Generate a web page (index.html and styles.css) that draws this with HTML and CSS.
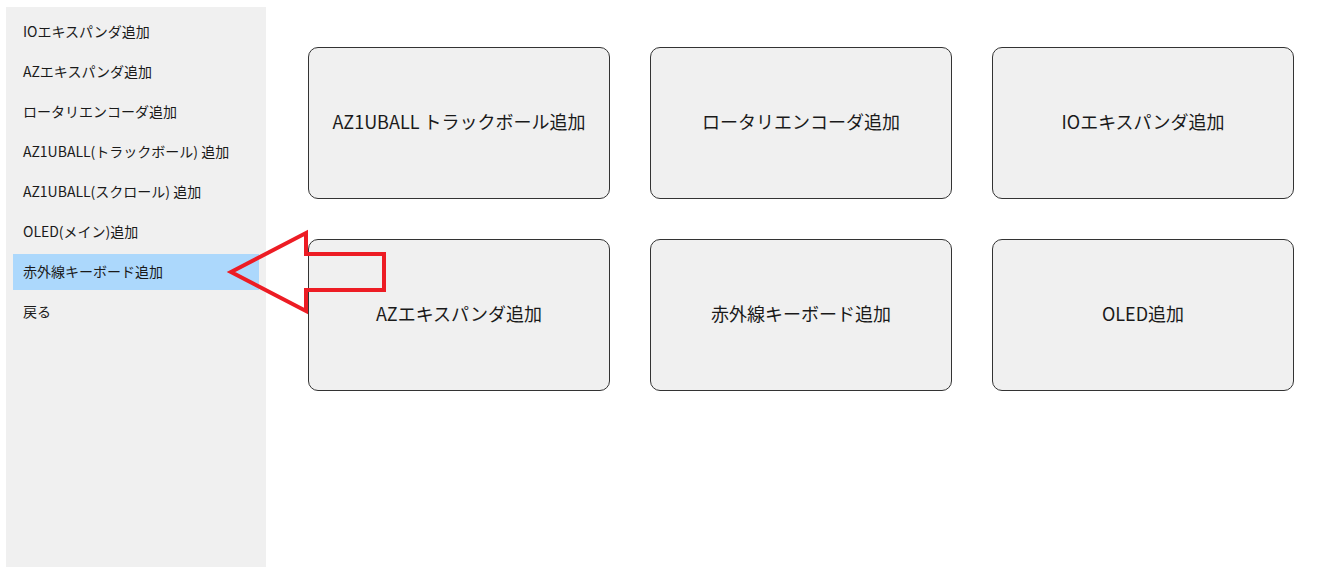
FILE: index.html
```html
<!DOCTYPE html>
<html lang="ja">
<head>
<meta charset="utf-8">
<link rel="stylesheet" href="styles.css">
</head>
<body>
<div class="app">
  <nav class="sidebar">
    <div class="item">IOエキスパンダ追加</div>
    <div class="item">AZエキスパンダ追加</div>
    <div class="item">ロータリエンコーダ追加</div>
    <div class="item">AZ1UBALL(トラックボール) 追加</div>
    <div class="item">AZ1UBALL(スクロール) 追加</div>
    <div class="item">OLED(メイン)追加</div>
    <div class="item selected">赤外線キーボード追加</div>
    <div class="item">戻る</div>
  </nav>
  <main class="main">
    <div class="grid">
      <div class="card">AZ1UBALL トラックボール追加</div>
      <div class="card">ロータリエンコーダ追加</div>
      <div class="card">IOエキスパンダ追加</div>
      <div class="card">AZエキスパンダ追加</div>
      <div class="card">赤外線キーボード追加</div>
      <div class="card">OLED追加</div>
    </div>
  </main>
</div>
<svg class="arrow" width="1317" height="567" viewBox="0 0 1317 567">
  <polygon points="231,272 306,233 306,254 384,254 384,290 306,290 306,311" fill="none" stroke="#ed1c24" stroke-width="4" stroke-linejoin="miter" stroke-miterlimit="10"/>
</svg>
</body>
</html>
```
FILE: styles.css
```css
html, body {
  margin: 0;
  padding: 0;
  background: #ffffff;
  height: 100%;
}
body {
  font-family: "Noto Sans CJK JP", "Open Sans", sans-serif;
  color: #1a1a1a;
  overflow: hidden;
}
.app {
  display: flex;
  height: 567px;
}
.sidebar {
  width: 260px;
  margin: 7px 0 0 6px;
  padding: 7px;
  box-sizing: border-box;
  background: #f0f0f0;
  display: flex;
  flex-direction: column;
  gap: 4px;
}
.item {
  height: 36px;
  box-sizing: border-box;
  display: flex;
  align-items: center;
  padding: 0 0 2px 10px;
  font-size: 14px;
}
.item.selected {
  background: #acd8fc;
}
.main {
  padding: 47px 0 0 42px;
}
.grid {
  display: grid;
  grid-template-columns: repeat(3, 302px);
  grid-auto-rows: 152px;
  gap: 40px;
}
.card {
  box-sizing: border-box;
  border: 1px solid #333;
  border-radius: 10px;
  background: #f0f0f0;
  display: flex;
  align-items: center;
  justify-content: center;
  padding-bottom: 4px;
  font-size: 18px;
}
.arrow {
  position: absolute;
  left: 0;
  top: 0;
  pointer-events: none;
}
```
